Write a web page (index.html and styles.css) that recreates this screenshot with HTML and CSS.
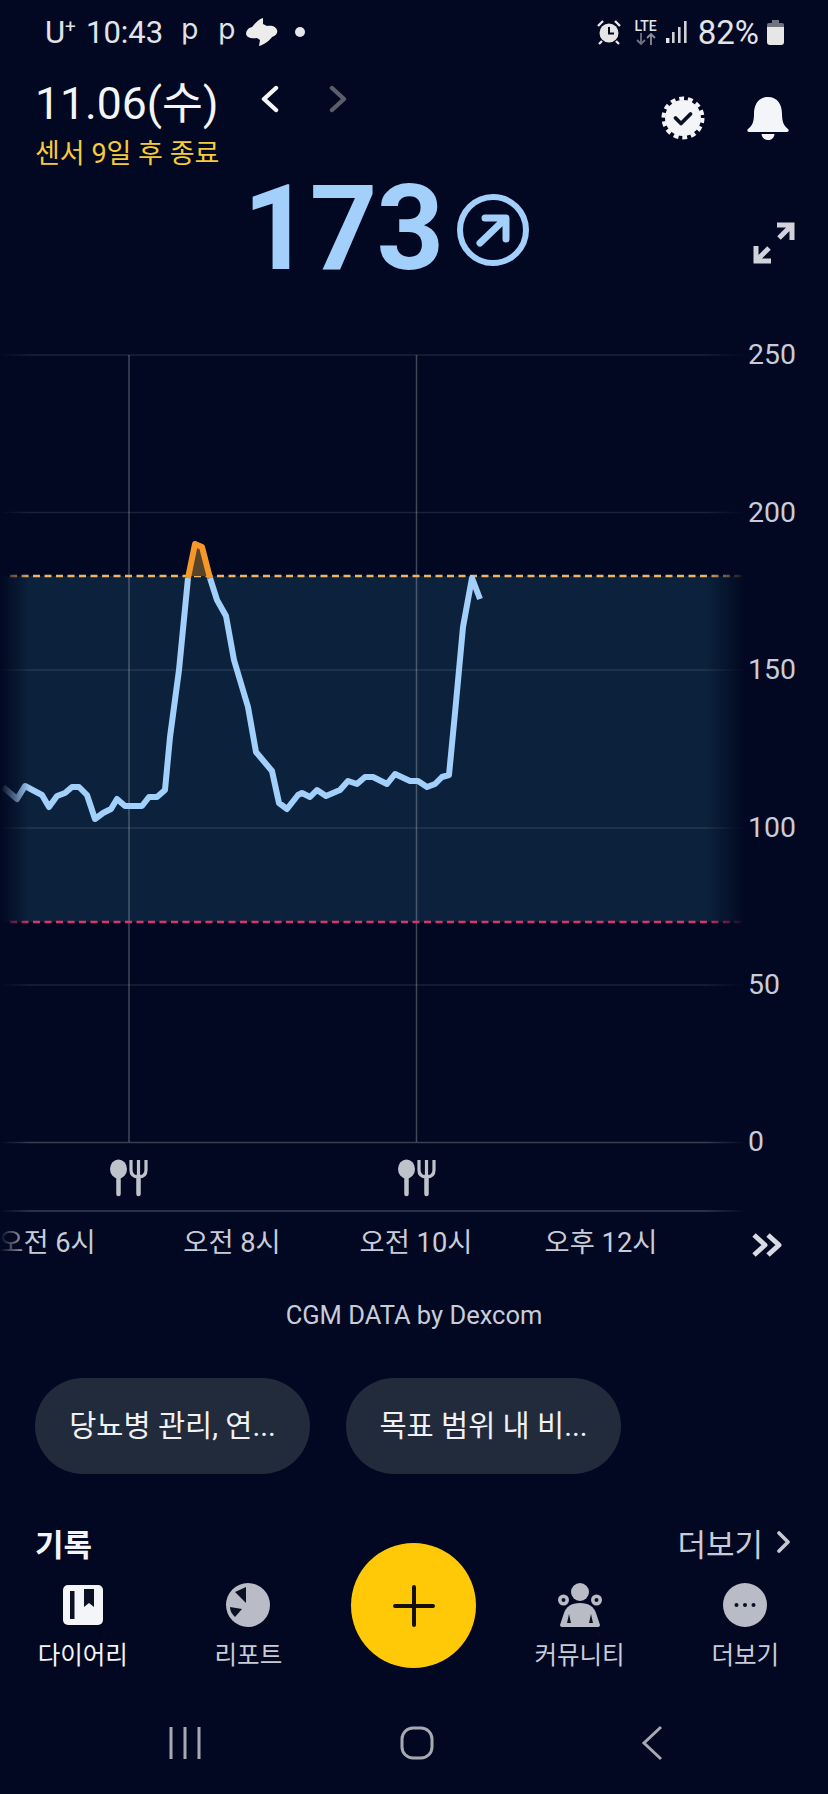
FILE: index.html
```html
<!DOCTYPE html>
<html lang="ko">
<head>
    <meta charset="UTF-8">
    <meta name="viewport" content="width=device-width, initial-scale=1.0">
    <title>혈당 그래프</title>
    <link rel="stylesheet" href="styles.css">
</head>
<body>
    <div class="screen">
        <div class="status-bar">
            <div class="status-left">
                <span class="carrier">U<sup>+</sup></span>
                <span>10:43</span>
                <span class="status-p first">p</span>
                <span class="status-p">p</span>
                <svg class="status-swirl" width="32" height="30" viewBox="0 0 32 30">
                    <path d="M17 1C12 2 8 8 6 10 2 11 0 14 0 17c1 4 6 5 11 4l3 2-1 6c5-1 11-6 13-9 4-1 6-4 5-7-1-4-6-5-10-4l-4-2z" fill="#ececec"/>
                </svg>
                <span class="status-dot"></span>
            </div>
            <div class="status-right">
                <svg width="26" height="28" viewBox="0 0 26 28">
                    <circle cx="13" cy="15" r="9.5" fill="#e6e6e6"/>
                    <path d="M13 9v6.5h5" fill="none" stroke="#020821" stroke-width="2"/>
                    <path d="M2 8l5-5M24 8l-5-5M6 23l-3 3M20 23l3 3" stroke="#e6e6e6" stroke-width="2.4"/>
                </svg>
                <div class="lte">
                    <span>LTE</span>
                    <svg width="22" height="12" viewBox="0 0 22 12">
                        <path d="M6 0v11M2 7l4 4 4-4" fill="none" stroke="#6f7380" stroke-width="1.8"/>
                        <path d="M16 12V1M12 5l4-4 4 4" fill="none" stroke="#8a8e9a" stroke-width="1.8"/>
                    </svg>
                </div>
                <svg width="22" height="24" viewBox="0 0 22 24">
                    <rect x="0" y="18" width="3.4" height="5" fill="#e6e6e6"/>
                    <rect x="6" y="12" width="2.6" height="11" fill="#cfd1d6"/>
                    <rect x="12" y="7" width="2.6" height="16" fill="#cfd1d6"/>
                    <rect x="18" y="1" width="2.6" height="22" fill="#cfd1d6"/>
                </svg>
                <span class="battery-text">82%</span>
                <svg class="battery" width="17" height="25" viewBox="0 0 17 25">
                    <path d="M5 0h7v3h-7z" fill="#6f7380"/>
                    <path d="M2 3h13a2 2 0 0 1 2 2v2h-17v-2a2 2 0 0 1 2-2z" fill="#6f7380"/>
                    <path d="M0 7h17v15a3 3 0 0 1-3 3h-11a3 3 0 0 1-3-3z" fill="#e6e6e6"/>
                </svg>
            </div>
        </div>

        <div class="header">
            <div class="header-left">
                <div class="date-row">
                    <span class="date">11.06(수)</span>
                    <svg class="date-arrow" width="20" height="28" viewBox="0 0 20 28">
                        <path d="M16 3L4 14l12 11" fill="none" stroke="#f4f5f8" stroke-width="4.4" stroke-linecap="round" stroke-linejoin="round"/>
                    </svg>
                    <svg class="date-arrow next" width="20" height="28" viewBox="0 0 20 28">
                        <path d="M4 3l12 11L4 25" fill="none" stroke="#5a5e6b" stroke-width="4.4" stroke-linecap="round" stroke-linejoin="round"/>
                    </svg>
                </div>
                <div class="sensor">센서 9일 후 종료</div>
            </div>
            <div class="header-right">
                <svg width="46" height="46" viewBox="0 0 46 46">
                    <circle cx="23" cy="23" r="18" fill="#f4f5f8"/>
                    <circle cx="23" cy="23" r="19.5" fill="none" stroke="#f4f5f8" stroke-width="4" stroke-dasharray="4.9 3.85"/>
                    <path d="M15.5 23l5.5 5.5 9.5-9.5" fill="none" stroke="#0b1024" stroke-width="3.8" stroke-linecap="round" stroke-linejoin="round"/>
                </svg>
                <svg width="44" height="46" viewBox="0 0 44 46">
                    <path d="M22 2C12 2 8 10 8 19c0 8-2 12-6 15-1 1-1 3 1 3h38c2 0 2-2 1-3-4-3-6-7-6-15 0-9-4-17-14-17z" fill="#f4f5f8"/>
                    <path d="M15.500 39h13c-.5 4-3 6-6.500 6s-6-2-6.500-6z" fill="#f4f5f8"/>
                </svg>
            </div>
        </div>

        <div class="reading">
            <span class="reading-value">173</span>
            <svg class="reading-trend" width="74" height="74" viewBox="0 0 74 74">
                <circle cx="37" cy="37" r="33" fill="none" stroke="#a3cffb" stroke-width="6"/>
                <path d="M24 50l25-24M29 25h21v21" fill="none" stroke="#a3cffb" stroke-width="7" stroke-linecap="round" stroke-linejoin="round"/>
            </svg>
            <svg class="reading-expand" width="42" height="42" viewBox="0 0 42 42">
                <path d="M24 3h15v15M38 4L26 16M18 39H3V24M4 38l12-12" fill="none" stroke="#d2d3da" stroke-width="5"/>
            </svg>
        </div>

        <svg class="chart" width="828" height="945" viewBox="0 325 828 945">
            <defs>
                <linearGradient id="leftFade" x1="0" x2="1" y1="0" y2="0">
                    <stop offset="0" stop-color="#020821"/>
                    <stop offset="1" stop-color="#020821" stop-opacity="0"/>
                </linearGradient>
                <linearGradient id="rightFade" x1="0" x2="1" y1="0" y2="0">
                    <stop offset="0" stop-color="#020821" stop-opacity="0"/>
                    <stop offset="1" stop-color="#020821"/>
                </linearGradient>
            </defs>

            <rect class="band" x="0" y="576" width="745" height="346"/>
            <line class="grid" x1="0" x2="745" y1="355" y2="355"/>
            <line class="grid" x1="0" x2="745" y1="512.500" y2="512.500"/>
            <line class="grid" x1="0" x2="745" y1="670" y2="670"/>
            <line class="grid" x1="0" x2="745" y1="828" y2="828"/>
            <line class="grid" x1="0" x2="745" y1="985" y2="985"/>
            <line class="grid base" x1="0" x2="745" y1="1142.500" y2="1142.500"/>
            <line class="grid base" x1="0" x2="745" y1="1211" y2="1211"/>
            <line class="grid-v" x1="129" x2="129" y1="355" y2="1142"/>
            <line class="grid-v" x1="416.500" x2="416.500" y1="355" y2="1142"/>
            <line class="limit high" x1="10" x2="745" y1="576" y2="576"/>
            <line class="limit low" x1="10" x2="745" y1="922" y2="922"/>
            <rect x="705" y="340" width="40" height="890" fill="url(#rightFade)"/>

            <polygon class="peak-fill" points="188,576 195,546 202,549 210,576"/>
            <polyline class="trace" points="3,787 17,799 25,786 42,795 49,807 57,796 65,793 72,787 79,787 87,795 95,819 103,813 111,809 117,799 125,806 142,806 149,797 157,797 165,790 170,737 179,670 188,578"/>
            <polyline class="trace" points="210,578 217,600 226,616 234,660 248,707 256,752 272,771 279,803 287,809 298,795 302,793 310,797 317,790 326,796 340,790 348,781 357,784 365,777 373,777 387,784 395,774 410,781 418,781 427,787 435,784 442,777 449,775 455,713 463,627 472,578 480,599"/>
            <polyline class="trace over" points="188,578 195,544 202,547 210,578"/>

            <g class="meal">
                <ellipse cx="118.500" cy="1169" rx="8.500" ry="9.500"/>
                <path class="meal-stroke" d="M118.500 1175v19M138.500 1176v18"/>
                <path class="meal-thin" d="M131 1160v10c0 5 3 7 7.500 7s7.500-2 7.500-7v-10M138.500 1160v16"/>
            </g>
            <g class="meal">
                <ellipse cx="406.500" cy="1169" rx="8.500" ry="9.500"/>
                <path class="meal-stroke" d="M406.500 1175v19M426.500 1176v18"/>
                <path class="meal-thin" d="M419 1160v10c0 5 3 7 7.500 7s7.500-2 7.500-7v-10M426.500 1160v16"/>
            </g>

            <text class="axis" x="748" y="363.500">250</text>
            <text class="axis" x="748" y="521.500">200</text>
            <text class="axis" x="748" y="679">150</text>
            <text class="axis" x="748" y="837">100</text>
            <text class="axis" x="748" y="994">50</text>
            <text class="axis" x="748" y="1151">0</text>

            <text class="time" x="47" y="1252">오전 6시</text>
            <text class="time" x="232" y="1252">오전 8시</text>
            <text class="time" x="416" y="1252">오전 10시</text>
            <text class="time" x="601" y="1252">오후 12시</text>

            <path class="more-arrows" d="M754 1235l11 10-11 10M768 1235l11 10-11 10"/>
            <rect x="0" y="325" width="30" height="945" fill="url(#leftFade)"/>
        </svg>

        <div class="source">CGM DATA by Dexcom</div>

        <div class="chips">
            <div class="chip">당뇨병 관리, 연...</div>
            <div class="chip">목표 범위 내 비...</div>
        </div>

        <div class="records">
            <span class="records-title">기록</span>
            <span class="records-more">
                더보기
                <svg width="14" height="22" viewBox="0 0 14 22">
                    <path d="M2 2l9 9-9 9" fill="none" stroke="#c6c9d4" stroke-width="3.600" stroke-linecap="round" stroke-linejoin="round"/>
                </svg>
            </span>
        </div>

        <div class="tabs">
            <div class="tab active">
                <svg width="44" height="44" viewBox="0 0 44 44">
                    <rect x="2" y="2" width="40" height="40" rx="5" fill="#f4f5f8"/>
                    <rect x="9" y="8" width="4.500" height="28" fill="#0b1024"/>
                    <path d="M23 6h10v18l-5-4-5 4z" fill="#0b1024"/>
                </svg>
                <span>다이어리</span>
            </div>
            <div class="tab">
                <svg width="44" height="44" viewBox="0 0 44 44">
                    <circle cx="22" cy="22" r="22" fill="#b9bcc6"/>
                    <path d="M20 4L9 9l11 11z" fill="#0b1024"/>
                    <path d="M4 24l12 2-7 8c-3-3-5-6-5-10z" fill="#0b1024"/>
                </svg>
                <span>리포트</span>
            </div>
            <div class="tab">
                <div class="fab">
                    <svg width="42" height="42" viewBox="0 0 42 42">
                        <path d="M21 2v38M2 21h38" stroke="#15110a" stroke-width="4" stroke-linecap="round"/>
                    </svg>
                </div>
            </div>
            <div class="tab">
                <svg width="44" height="44" viewBox="0 0 44 44">
                    <circle cx="22" cy="9" r="9" fill="#b9bcc6"/>
                    <circle cx="5.500" cy="17" r="5.500" fill="#b9bcc6"/>
                    <circle cx="38.500" cy="17" r="5.500" fill="#b9bcc6"/>
                    <circle cx="5.500" cy="17" r="2" fill="#0b1024"/>
                    <circle cx="38.500" cy="17" r="2" fill="#0b1024"/>
                    <path d="M22 20c9 0 14 4 16 10l4 12c0 1-1 2-2 2H4c-1 0-2-1-2-2l4-12c2-6 7-10 16-10z" fill="#b9bcc6"/>
                    <path d="M11 31l-2 9h4zM33 31l2 9h-4z" fill="#0b1024"/>
                </svg>
                <span>커뮤니티</span>
            </div>
            <div class="tab">
                <svg width="44" height="44" viewBox="0 0 44 44">
                    <circle cx="22" cy="22" r="22" fill="#b9bcc6"/>
                    <circle cx="13.500" cy="22" r="2" fill="#0b1024"/>
                    <circle cx="22" cy="22" r="2" fill="#0b1024"/>
                    <circle cx="30.500" cy="22" r="2" fill="#0b1024"/>
                </svg>
                <span>더보기</span>
            </div>
        </div>

        <div class="nav-bar">
            <svg width="34" height="34" viewBox="0 0 34 34">
                <path d="M3 1v32M17 1v32M31 1v32" stroke="#a7a9b2" stroke-width="3"/>
            </svg>
            <svg class="nav-home" width="34" height="34" viewBox="0 0 34 34">
                <rect x="2" y="2" width="30" height="30" rx="11" fill="none" stroke="#a7a9b2" stroke-width="3"/>
            </svg>
            <svg width="24" height="36" viewBox="0 0 24 36">
                <path d="M21 2L4 18l17 16" fill="none" stroke="#a7a9b2" stroke-width="3"/>
            </svg>
        </div>
    </div>
</body>
</html>
```

FILE: styles.css
```css
body {
    margin: 0;
    padding: 0;
    background-color: #020821;
    font-family: Roboto, "Noto Sans CJK KR", sans-serif;
    color: #c8ccd9;
}
.screen {
    width: 828px;
    height: 1794px;
    overflow: hidden;
    display: flex;
    flex-direction: column;
}
svg {
    display: block;
    flex: none;
}

/* status bar */
.status-bar {
    height: 64px;
    display: flex;
    justify-content: space-between;
    align-items: center;
    padding: 0 44px 0 45px;
    font-size: 31px;
    color: #e2e3e8;
}
.status-left, .status-right {
    display: flex;
    align-items: center;
}
.carrier {
    width: 41px;
}
.carrier sup {
    font-size: 19px;
    line-height: 0;
    vertical-align: 10px;
}
.status-p {
    font-family: Inter, sans-serif;
    font-size: 28px;
    margin-left: 20px;
    position: relative;
    top: -3px;
}
.status-p.first {
    margin-left: 18px;
}
.status-swirl {
    margin-left: 10px;
}
.status-dot {
    width: 10px;
    height: 10px;
    border-radius: 50%;
    background: #e6e6e6;
    margin-left: 17px;
}
.status-right {
    gap: 8px;
}
.lte {
    display: flex;
    flex-direction: column;
    align-items: center;
    font-size: 14px;
    font-weight: 500;
    line-height: 14px;
    margin: 0 1px 0 4px;
}
.battery-text {
    font-size: 33px;
    margin-left: 2px;
}

/* header */
.header {
    height: 106px;
    display: flex;
    justify-content: space-between;
    padding: 5px 38px 0 35px;
    box-sizing: border-box;
}
.date-row {
    display: flex;
    align-items: center;
    height: 60px;
}
.date {
    font-size: 44.5px;
    color: #f4f5f8;
    width: 225px;
}
.date-arrow.next {
    margin-left: 48px;
}
.sensor {
    font-size: 27px;
    line-height: 32px;
    color: #f5cb3a;
    margin-top: 9px;
}
.header-right {
    display: flex;
    gap: 40px;
    padding-top: 26px;
}

/* current reading */
.reading {
    height: 155px;
    display: flex;
    align-items: flex-start;
    padding: 0 33px 0 243px;
}
.reading-value {
    font-weight: 700;
    font-size: 118px;
    line-height: 118px;
    letter-spacing: -1px;
    color: #a3cffb;
}
.reading-trend {
    margin: 23px 0 0 13px;
}
.reading-expand {
    margin: 52px 0 0 auto;
}

/* chart */
.band {
    fill: #0c223c;
}
.grid {
    stroke: #ffffff;
    stroke-opacity: 0.1;
    stroke-width: 1.5;
}
.grid.base {
    stroke-opacity: 0.22;
}
.grid-v {
    stroke: #ffffff;
    stroke-opacity: 0.25;
    stroke-width: 1.5;
}
.limit {
    stroke-width: 2.5;
    stroke-dasharray: 7 4.5;
}
.limit.high {
    stroke: #efb266;
}
.limit.low {
    stroke: #d9356b;
}
.trace {
    fill: none;
    stroke: #a3cffb;
    stroke-width: 6;
    stroke-linejoin: round;
}
.trace.over {
    stroke: #f6972a;
}
.peak-fill {
    fill: #5a4427;
}
.meal {
    fill: #bfc2cb;
}
.meal-stroke {
    fill: none;
    stroke: #bfc2cb;
    stroke-width: 4.5;
    stroke-linecap: round;
}
.meal-thin {
    fill: none;
    stroke: #bfc2cb;
    stroke-width: 3.2;
}
.axis {
    font-size: 28.4px;
    fill: #c8ccd9;
}
.time {
    font-size: 27.3px;
    fill: #c8ccd9;
    text-anchor: middle;
}
.more-arrows {
    fill: none;
    stroke: #d9dbe3;
    stroke-width: 5;
    stroke-linejoin: round;
}

.source {
    height: 88px;
    line-height: 88px;
    text-align: center;
    font-size: 25.5px;
    margin-top: 1px;
}

/* suggestion chips */
.chips {
    display: flex;
    gap: 36px;
    padding: 19px 0 0 35px;
}
.chip {
    width: 275px;
    height: 96px;
    line-height: 96px;
    border-radius: 48px;
    background: #212b3b;
    color: #f0f1f5;
    font-size: 29.5px;
    text-align: center;
    white-space: nowrap;
}

/* records */
.records {
    display: flex;
    justify-content: space-between;
    align-items: center;
    height: 60px;
    margin-top: 38px;
    padding: 0 37px 0 35px;
}
.records-title {
    font-size: 31px;
    font-weight: 700;
    color: #f4f5f8;
}
.records-more {
    display: flex;
    align-items: center;
    gap: 14px;
    font-size: 31px;
    color: #c8ccd9;
}

/* bottom tabs */
.tabs {
    display: grid;
    grid-template-columns: repeat(5, 1fr);
    margin-top: 11px;
}
.tab {
    display: flex;
    flex-direction: column;
    align-items: center;
    gap: 12px;
    font-size: 24.5px;
    line-height: 34px;
}
.tab.active {
    color: #f4f5f8;
}
.fab {
    width: 125px;
    height: 125px;
    margin-top: -40px;
    border-radius: 50%;
    background: #ffc907;
    display: flex;
    align-items: center;
    justify-content: center;
}

/* android nav */
.nav-bar {
    display: flex;
    align-items: center;
    padding-left: 168px;
    margin-top: 52px;
}
.nav-home {
    margin: 0 206px 0 198px;
}
```
